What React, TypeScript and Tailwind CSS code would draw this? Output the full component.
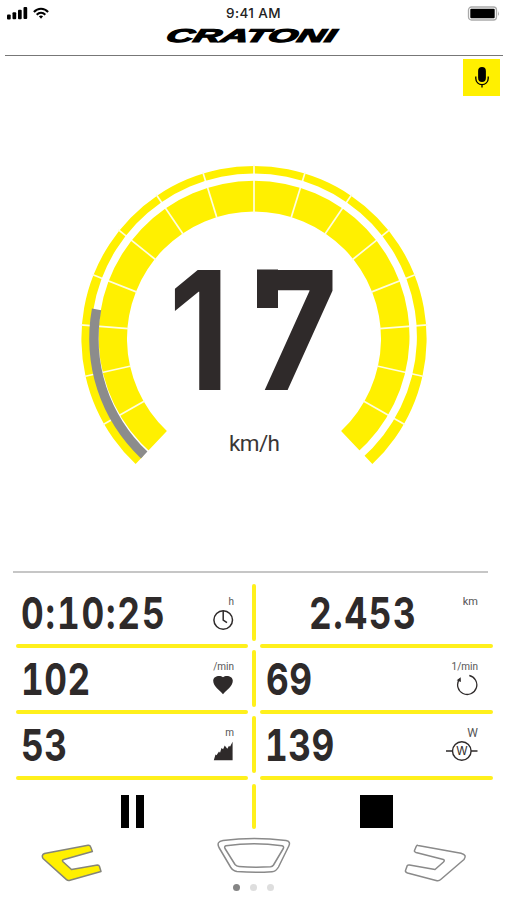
import React from "react";

const CX = 254;
const CY = 338.5;
const STEP = 17.1;
const END = 136.7;

function polar(radius: number, degrees: number, cy = CY) {
  const a = (degrees * Math.PI) / 180;
  return [CX + radius * Math.sin(a), cy - radius * Math.cos(a)];
}

function band(inner: number, outer: number, from: number, to: number, cy = CY) {
  const [ax, ay] = polar(outer, from, cy);
  const [bx, by] = polar(outer, to, cy);
  const [cx, dy0] = polar(inner, to, cy);
  const [dx, dy] = polar(inner, from, cy);
  const large = to - from > 180 ? 1 : 0;
  return `M${ax} ${ay}A${outer} ${outer} 0 ${large} 1 ${bx} ${by}L${cx} ${dy0}A${inner} ${inner} 0 ${large} 0 ${dx} ${dy}Z`;
}

const ticks = Array.from({ length: 15 }, (_, i) => (i - 7) * STEP);

function Gauge() {
  return (
    <svg width="380" height="320" viewBox="64 155 380 320" className="block">
      <path d={band(127, 172.6, -END, END)} fill="#fff000" />
      {ticks.map((t) => {
        const [x1, y1] = polar(126, t);
        const [x2, y2] = polar(174, t);
        return <line key={t} x1={x1} y1={y1} x2={x2} y2={y2} stroke="#fffde0" strokeWidth="1.7" />;
      })}
      <path d={band(155.5, 162.9, -139, 139, 336.3)} fill="white" />
      <path d={band(155.4, 164.8, -END, -79.5)} fill="#8c8c8c" />
      <g fill="#2f2a2a" fontFamily="Inter, sans-serif" fontWeight="700" fontSize="165">
        <text transform="translate(168.5 389.5) scale(.86 1)">1</text>
        <text transform="translate(252 389.5) scale(.895 1)">7</text>
      </g>
      <rect x="257" y="269.500" width="21" height="38.500" fill="#2f2a2a" />
      <text x="254.5" y="451" textAnchor="middle" fontFamily="Roboto, sans-serif" fontSize="22.5" fill="#3a3636" textLength="51">km/h</text>
    </svg>
  );
}

function ClockIcon() {
  return (
    <svg width="22" height="22" viewBox="0 0 22 22" fill="none" stroke="#2e2a2a" strokeWidth="1.5">
      <circle cx="11.200" cy="11" r="9.3" />
      <path d="M11.200 2v9l3.800 2.700" />
    </svg>
  );
}

function HeartIcon() {
  return (
    <svg width="22" height="22" viewBox="0 0 22 22" fill="#2e2a2a">
      <path d="M11 20.300C8 16.600 1.200 12.400 1.200 6.800 1.200 2 8 .9 11 3.200c3-2.300 9.800-1.200 9.800 3.600 0 5.600-6.800 9.800-9.800 13.500Z" />
    </svg>
  );
}

function CadenceIcon() {
  return (
    <svg width="22" height="22" viewBox="0 0 22 22" fill="none" stroke="#2e2a2a" strokeWidth="1.3">
      <path d="M13.300 1.500A9.600 9.600 0 1 1 3.200 5.600" />
      <path d="M.7 6.300 4.700 3.200 4.900 7.900Z" fill="#2e2a2a" stroke="none" />
    </svg>
  );
}

function AltitudeIcon() {
  return (
    <svg width="22" height="22" viewBox="0 0 22 22" fill="#2e2a2a">
      <path d="M1.800 20.200 3.500 14.500l1 .8L7 11.500l1 1.200L9.500 8l1.600 1.200L12.700 5.500l2.600 3.300L17 5.800l1 1L20.600 1.800v18.400Z" />
    </svg>
  );
}

function PowerIcon() {
  return (
    <svg width="32" height="22" viewBox="0 0 32 22" fill="none" stroke="#2e2a2a" strokeWidth="1.400">
      <circle cx="15.800" cy="11" r="9.300" />
      <path d="M0 11h6.500M25.100 11H31.500" />
      <text x="15.800" y="15.200" textAnchor="middle" fontFamily="Inter, sans-serif" fontSize="11.500" fill="#2e2a2a" stroke="none">W</text>
    </svg>
  );
}

type MetricProps = {
  value: string;
  unit: string;
  icon?: React.ReactNode;
  right?: boolean;
  indent?: string;
  unitPad?: string;
  unitSize?: string;
  tracking?: string;
};

function Metric({ value, unit, icon, right, indent = "pl-[5px]", unitPad = "pt-[13px]", unitSize = "text-[10px]", tracking = "tracking-[0.6px]" }: MetricProps) {
  return (
    <div className={`flex h-full justify-between ${indent} ${right ? "w-[233px] pr-[15px]" : "w-[232px] pr-[14px]"}`}>
      <span className={`origin-left scale-x-[0.8] whitespace-nowrap pt-[3px] font-[Inter] text-[44px] leading-[56px] font-bold tabular-nums [font-feature-settings:'calt'_0] ${tracking}`}>{value}</span>
      <span className={`flex flex-col items-end ${unitPad}`}>
        <span className={`leading-[12px] text-[#555] ${unitSize}`}>{unit}</span>
        <span className="mt-[1px]">{icon}</span>
      </span>
    </div>
  );
}

function Row({ left, right }: { left: React.ReactNode; right: React.ReactNode }) {
  return (
    <div>
      <div className="flex h-[62px] items-end pl-4">
        <div className="h-[62px]">{left}</div>
        <div className="mb-[3px] flex h-[57px] w-3 justify-center">
          <div className="w-[4px] rounded-full bg-[#fff01c]" />
        </div>
        <div className="h-[62px]">{right}</div>
      </div>
      <div className="flex gap-3 pl-4">
        <div className="h-[4px] w-[232px] rounded-full bg-[#fff01c]" />
        <div className="h-[4px] w-[233px] rounded-full bg-[#fff01c]" />
      </div>
    </div>
  );
}

function Header() {
  return (
    <header className="h-[56px]">
      <div className="grid h-[26px] grid-cols-[1fr_auto_1fr] items-center px-[7px]">
        <div className="flex items-center gap-[5px]">
          <svg width="21" height="14" viewBox="0 0 21 14">
            <rect x="0" y="8.500" width="3.700" height="5" rx="1" />
            <rect x="5.500" y="6.300" width="3.700" height="7" rx="1" />
            <rect x="11" y="3.700" width="3.700" height="9.500" rx="1" />
            <rect x="16.500" y="1" width="3.700" height="12" rx="1" />
          </svg>
          <svg width="16" height="13" viewBox="0 0 16 13" fill="none" stroke="black" strokeWidth="2">
            <path d="M.9 5C4.800 .7 11.200 .7 15.100 5" />
            <path d="M3.700 7.700C6.200 5.100 9.800 5.100 12.300 7.700" />
            <path d="M5.900 9.300Q8 7.700 10.100 9.300L8 11.700Z" fill="black" stroke="none" />
          </svg>
        </div>
        <span className="font-[Inter] text-[13.5px] leading-4 font-medium tracking-[0.4px] text-[#222]">9:41 AM</span>
        <div className="flex justify-end">
          <svg width="33" height="15" viewBox="0 0 33 15">
            <rect x="1.500" y="1" width="28" height="13" rx="3" fill="white" stroke="#aaa" strokeWidth="1.300" />
            <rect x="3.300" y="2.800" width="24.400" height="9.400" rx="1" />
            <path d="M31 5q1.800 2.500 0 5Z" fill="#aaa" />
          </svg>
        </div>
      </div>
      <div className="flex h-[29px] justify-center">
        <svg width="224" height="29" viewBox="142 26 224 29">
          <text transform="translate(165 42) skewX(-16)" fontFamily="Liberation Sans, Arial, sans-serif" fontStyle="italic" fontWeight="700" fontSize="18.500" textLength="169" lengthAdjust="spacingAndGlyphs" stroke="black" strokeWidth="1.200">CRATONI</text>
        </svg>
      </div>
      <div className="mr-1 ml-[5px] h-px bg-[#777]" />
    </header>
  );
}

export default function App() {
  return (
    <main className="flex h-[900px] w-[507px] flex-col overflow-hidden bg-white font-[Roboto] text-[#2e2a2a]">
      <Header />
      <div className="flex h-[99px] justify-end pt-[3px] pr-[7px]">
        <div className="flex size-[37px] items-center justify-center bg-[#fff000]">
          <svg width="16" height="24" viewBox="0 0 16 24">
            <rect x="4.100" y="1" width="7.800" height="15" rx="3.900" />
            <path d="M1.800 10.500v2a6.200 6.200 0 0 0 12.400 0v-2M8 18.500v3" fill="none" stroke="black" strokeWidth="1.300" />
          </svg>
        </div>
      </div>
      <section className="flex h-[416px] pl-[64px]">
        <Gauge />
      </section>
      <section>
        <div className="ml-[13px] h-[2px] w-[475px] bg-[#c6c6c6]" />
        <div className="pt-[9px]">
          <Row
            left={<Metric value="0:10:25" unit="h" icon={<ClockIcon />} unitPad="pt-[14px]" tracking="tracking-[2.3px]" />}
            right={<Metric right value="2.453" unit="km" indent="pl-[49px]" unitPad="pt-[14px]" unitSize="text-[11px]" tracking="tracking-[2px]" />}
          />
          <Row left={<Metric value="102" unit="/min" icon={<HeartIcon />} />} right={<Metric right value="69" unit="1/min" icon={<CadenceIcon />} indent="pl-[6px]" />} />
          <Row
            left={<Metric value="53" unit="m" icon={<AltitudeIcon />} />}
            right={<Metric right value="139" unit="W" icon={<PowerIcon />} indent="pl-[5px]" unitSize="text-[12px]" />}
          />
        </div>
        <div className="flex h-[52px] pt-[4px]">
          <div className="flex w-[252px] gap-[7px] pt-[11px] pl-[121px]">
            <div className="h-[33px] w-[8px] bg-black" />
            <div className="h-[33px] w-[8px] bg-black" />
          </div>
          <div className="h-[45px] w-[4px] rounded-full bg-[#fff01c]" />
          <div className="pt-[11px] pl-[104px]">
            <div className="h-[33px] w-[33px] bg-black" />
          </div>
        </div>
      </section>
      <nav className="flex h-[52px] pl-[40px]" aria-label="Light">
        <svg width="64" height="52" viewBox="40 832 64 52" fill="#fff000" stroke="#858578" strokeWidth="1.500" strokeLinejoin="round">
          <path d="M44.500 853.500 88 845.300Q90 845 90.600 846.800L92.400 851.500 64 859.500Q61.500 860.200 63 861.700L71.500 869.500 97.500 865Q99 865 99.500 866.500L101 871.500 70 880.300Q68 881 66.500 879.600L43 858.500Q41 855 44.500 853.500Z" />
        </svg>
        <svg className="ml-[110px]" width="80" height="52" viewBox="214 832 80 52" fill="none" stroke="#8a8a8a" strokeWidth="1.500" strokeLinejoin="round">
          <path d="M223 840.500Q254 836.500 286 840.500 291 841.500 288.800 846L278.500 867Q276 871.500 272 871.800 254 873 237 871.500 233 871 230.500 867L219 847.500Q216 841.500 223 840.500Z" />
          <path d="M226 845.800Q254 841.500 282 845.800 284.300 846.500 283.300 848.500L273.500 865Q272.500 866.600 270.500 866.800 254 867.800 239 866.500 236.500 866.300 235 864.500L225 848.500Q224 846.500 226 845.800Z" />
        </svg>
        <svg className="ml-[108px]" width="68" height="52" viewBox="402 832 68 52" fill="none" stroke="#8a8a8a" strokeWidth="1.500" strokeLinejoin="round">
          <path d="M418 845.400 461 853.300Q467.500 855 464 859.500L441 879.300Q439 881.200 437 880.700L407.500 873Q405 872 405.500 870.500L407.300 865.500Q408 864.800 409.500 865L435 869.500 443.500 862Q445.500 860 442.500 859.300L416 852.500Q414 851.800 414.500 850.500L416.300 846.300Q417 845.100 418 845.400Z" />
        </svg>
      </nav>
      <div className="flex justify-center gap-[10px]">
        <span className="size-[7px] rounded-full bg-[#858585]" />
        <span className="size-[7px] rounded-full bg-[#dedede]" />
        <span className="size-[7px] rounded-full bg-[#dedede]" />
      </div>
    </main>
  );
}
